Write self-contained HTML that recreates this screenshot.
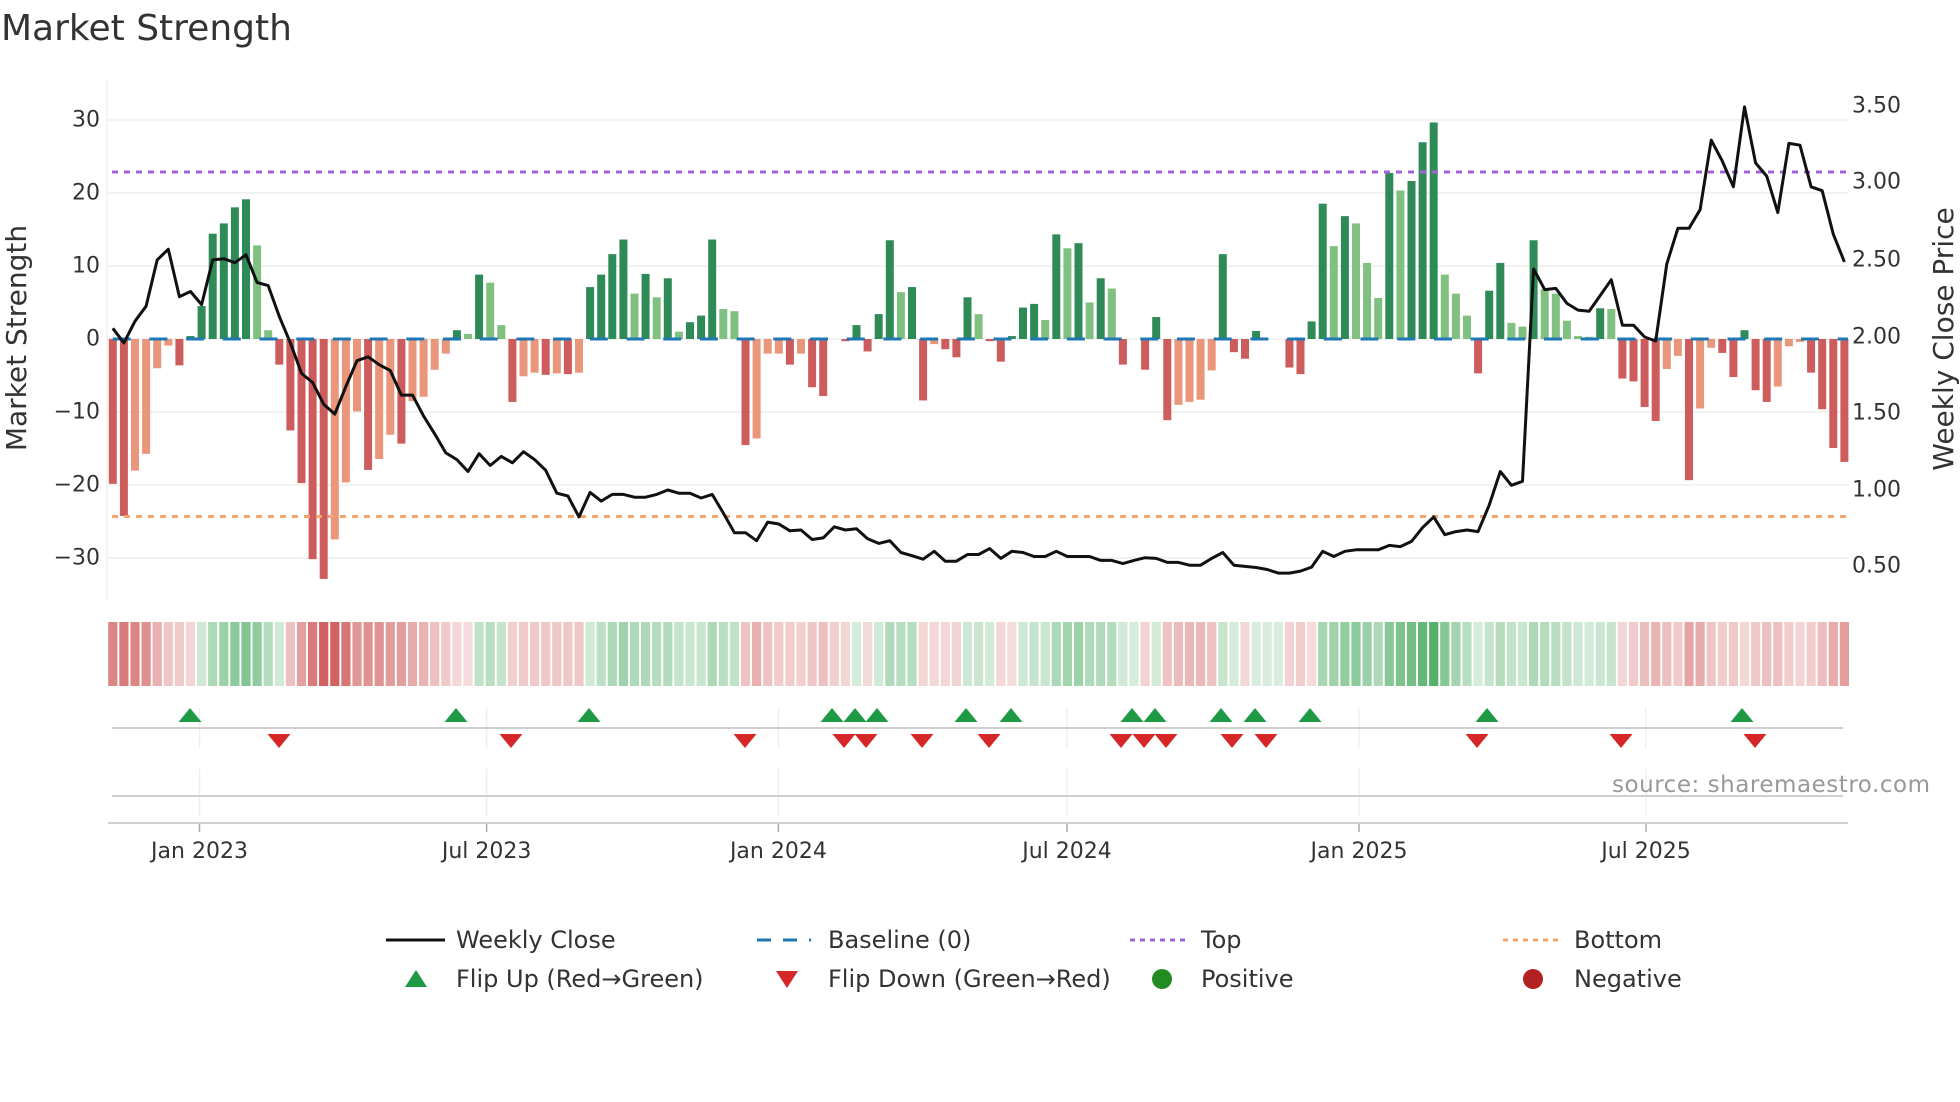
<!DOCTYPE html>
<html><head><meta charset="utf-8">
<style>
html,body{margin:0;padding:0;background:#fff;}
svg{display:block;font-family:"DejaVu Sans","Liberation Sans",sans-serif;}
</style></head>
<body>
<svg id="c" width="1960" height="1102" viewBox="0 0 1960 1102" xmlns="http://www.w3.org/2000/svg">
<rect width="1960" height="1102" fill="#fff"/>
<text x="1" y="40" font-size="36" fill="#333">Market Strength</text>
<g id="grid"></g>
<g id="bars"></g>
<g id="strip"></g>
<g id="lines"></g>
<g id="marks"></g>
<g font-size="22" fill="#333" text-anchor="end" dominant-baseline="central">
<text x="100" y="120">30</text><text x="100" y="193">20</text><text x="100" y="266">10</text>
<text x="100" y="339">0</text><text x="100" y="412">−10</text><text x="100" y="485">−20</text><text x="100" y="558">−30</text>
</g>
<g font-size="22" fill="#333" dominant-baseline="central">
<text x="1852" y="106">3.50</text><text x="1852" y="182">3.00</text><text x="1852" y="260">2.50</text>
<text x="1852" y="337">2.00</text><text x="1852" y="413">1.50</text><text x="1852" y="490">1.00</text><text x="1852" y="566">0.50</text>
</g>
<text transform="translate(26,338) rotate(-90)" font-size="28" fill="#333" text-anchor="middle">Market Strength</text>
<text transform="translate(1953,339) rotate(-90)" font-size="28" fill="#333" text-anchor="middle">Weekly Close Price</text>
<g font-size="22" fill="#333" text-anchor="middle">
<text x="199.5" y="858">Jan 2023</text><text x="486.6" y="858">Jul 2023</text><text x="778.4" y="858">Jan 2024</text>
<text x="1067" y="858">Jul 2024</text><text x="1359" y="858">Jan 2025</text><text x="1646" y="858">Jul 2025</text>
</g>
<text x="1612" y="792" font-size="23" fill="#999" textLength="318">source: sharemaestro.com</text>
<g font-size="24" fill="#333" dominant-baseline="central">
<line x1="386" y1="940" x2="445" y2="940" stroke="#111" stroke-width="3"/>
<text x="456" y="940">Weekly Close</text>
<line x1="757" y1="940" x2="811" y2="940" stroke="#1f77b4" stroke-width="3" stroke-dasharray="14 12"/>
<text x="828" y="940">Baseline (0)</text>
<line x1="1130" y1="940" x2="1186" y2="940" stroke="#a064d8" stroke-width="3" stroke-dasharray="5 5"/>
<text x="1201" y="940">Top</text>
<line x1="1503" y1="940" x2="1559" y2="940" stroke="#f2a46a" stroke-width="3" stroke-dasharray="5 5"/>
<text x="1574" y="940">Bottom</text>
<polygon points="405,987 427,987 416,970" fill="#1e9a45"/>
<text x="456" y="979">Flip Up (Red→Green)</text>
<polygon points="776,971 798,971 787,988" fill="#d62728"/>
<text x="828" y="979">Flip Down (Green→Red)</text>
<circle cx="1162" cy="979" r="10" fill="#228b22"/>
<text x="1201" y="979">Positive</text>
<circle cx="1533" cy="979" r="10" fill="#b22222"/>
<text x="1574" y="979">Negative</text>
</g>
</svg>
<script>
(function(){
var NS="http://www.w3.org/2000/svg";
function el(p,t,a){var e=document.createElementNS(NS,t);for(var k in a)e.setAttribute(k,a[k]);p.appendChild(e);return e;}
var V=[-19.8,-24.2,-18,-15.7,-4,-0.9,-3.6,0.4,4.5,14.4,15.8,18,19.1,12.8,1.2,-3.5,-12.5,-19.7,-30.1,-32.8,-27.4,-19.6,-9.9,-17.9,-16.4,-13.1,-14.3,-8.5,-7.9,-4.2,-2,1.2,0.7,8.8,7.7,1.9,-8.6,-5.1,-4.6,-4.9,-4.7,-4.8,-4.6,
7.1,8.8,11.6,13.6,6.2,8.9,5.7,8.3,1,2.3,3.2,13.6,4.1,3.8,-14.5,-13.6,-2,-2,-3.5,-2,-6.6,-7.8,0,-0.3,1.9,-1.7,3.4,13.5,6.4,7.1,-8.4,-0.7,-1.4,-2.5,5.7,3.4,-0.3,-3.1,0.4,4.3,4.8,
2.6,14.3,12.4,13.1,5,8.3,6.9,-3.5,0,-4.2,3,-11.1,-9,-8.6,-8.3,-4.3,11.6,-1.8,-2.7,1.1,0,0,-3.9,-4.8,2.4,18.5,12.7,16.8,15.8,10.4,5.6,22.7,20.3,21.6,26.9,29.6,8.8,6.2,3.2,-4.7,6.6,10.4,
2.2,1.7,13.5,6.8,6.2,2.5,0.4,0.3,4.2,4.1,-5.4,-5.8,-9.3,-11.2,-4.1,-2.3,-19.3,-9.5,-1.2,-1.9,-5.2,1.2,-7,-8.6,-6.5,-1,-0.4,-4.6,-9.6,-14.9,-16.8];
var F="ddlllldddddddllddddd"+"llldlldlllldldlldlldldl"+"ddddldldld"+"ddlldllldl"+"ddddddddld"+"dldddlddddd"+"ldldldlddd"+"ddlllldddd"+"ddddddldll"+"ldldddlllddd"+"lldllllldl"+"ddddlldlld"+"ddddllldddd";
var Z=[628,665,610,572,455,428,548,535,568,455,452,462,442,512,520,598,665,742,765,820,845,775,710,700,720,735,797,797,850,895,943,960,990,945,975,952,968,940,960,987,1045,1052,1105,
1043,1065,1048,1048,1055,1055,1048,1037,1045,1045,1057,1048,1095,1145,1145,1165,1118,1123,1140,1138,1162,1158,1130,1138,1135,1160,1172,1165,1195,1203,1212,1192,1217,1217,1200,1200,1185,1210,1192,1195,1205,
1205,1192,1205,1205,1205,1215,1215,1223,1215,1208,1210,1220,1220,1227,1227,1210,1195,1227,1230,1233,1238,1247,1247,1242,1232,1192,1205,1192,1188,1188,1188,1177,1180,1167,1132,1105,1150,1142,1138,1142,1075,990,
1025,1015,478,530,527,565,582,585,545,505,620,620,650,660,465,375,375,328,152,205,270,68,210,243,335,160,165,270,280,390,460];
var X0=112.8,P=11.10,Y0=339,K=7.315;
var g=document.getElementById('grid');
[120,193,266,339,412,485,558].forEach(function(y){el(g,'line',{x1:107,x2:1848,y1:y,y2:y,stroke:'#ededed','stroke-width':1.5});});
el(g,'line',{x1:107,x2:107,y1:80,y2:600,stroke:'#f0f0f0','stroke-width':1.5});
var b=document.getElementById('bars');
for(var i=0;i<V.length;i++){
 var v=V[i],x=X0+P*i,d=F[i]!=='l',c;
 if(v>=0)c=d?'#2e8b57':'#80c080';else c=d?'#cd5c5c':'#e9967a';
 var y1=Y0-v*K;
 if(Math.abs(v)<0.05)continue;
 el(b,'rect',{x:x-4,y:Math.min(y1,Y0),width:8,height:Math.abs(v*K),fill:c});
}
var s=document.getElementById('strip'),sm=V[0];
for(var i=0;i<V.length;i++){
 sm=0.55*V[i]+0.45*sm;
 var t=Math.min(1,Math.abs(sm)/30),a=0.2+0.75*t;
 var base=sm>=0?[60,165,85]:[205,80,80];
 var col='rgb('+base.map(function(q){return Math.round(255-(255-q)*a);}).join(',')+')';
 el(s,'rect',{x:X0+P*i-4.6,y:622,width:9.2,height:64,fill:col});
}
var L=document.getElementById('lines');
el(L,'line',{x1:112,x2:1848,y1:172,y2:172,stroke:'#a064d8','stroke-width':3,'stroke-dasharray':'6 6'});
el(L,'line',{x1:112,x2:1848,y1:516.5,y2:516.5,stroke:'#f2a46a','stroke-width':3,'stroke-dasharray':'6 6'});
el(L,'line',{x1:112.7,x2:1848,y1:Y0,y2:Y0,stroke:'#1f77b4','stroke-width':3,'stroke-dasharray':'18 18.7'});
var pts=Z.map(function(z,i){return (X0+P*i).toFixed(1)+','+(80+z/2.529).toFixed(1);}).join(' ');
el(L,'polyline',{points:pts,fill:'none',stroke:'#111','stroke-width':3,'stroke-linejoin':'round'});
var m=document.getElementById('marks');
var ticks=[199.5,486.6,778.4,1067,1359,1646];
ticks.forEach(function(x){
 el(m,'line',{x1:x,x2:x,y1:708,y2:748,stroke:'#eceff2','stroke-width':1.5});
 el(m,'line',{x1:x,x2:x,y1:769,y2:817,stroke:'#eceff2','stroke-width':1.5});
 el(m,'line',{x1:x,x2:x,y1:823,y2:832,stroke:'#aaa','stroke-width':1.5});
});
el(m,'line',{x1:112,x2:1843,y1:728,y2:728,stroke:'#cfcfcf','stroke-width':2});
el(m,'line',{x1:112,x2:1843,y1:796,y2:796,stroke:'#cfcfcf','stroke-width':2});
el(m,'line',{x1:108,x2:1848,y1:823,y2:823,stroke:'#cfcfcf','stroke-width':2});
[190,456,589,832,855,877,966,1011,1132,1155,1221,1255,1310,1487,1742].forEach(function(x){
 el(m,'polygon',{points:(x-11.5)+',722 '+(x+11.5)+',722 '+x+',708',fill:'#1e9a45'});});
[279,511,745,844,866,922,989,1121,1144,1166,1232,1266,1477,1621,1755].forEach(function(x){
 el(m,'polygon',{points:(x-11.5)+',734 '+(x+11.5)+',734 '+x+',748',fill:'#d62728'});});
})();
</script>
</body></html>
